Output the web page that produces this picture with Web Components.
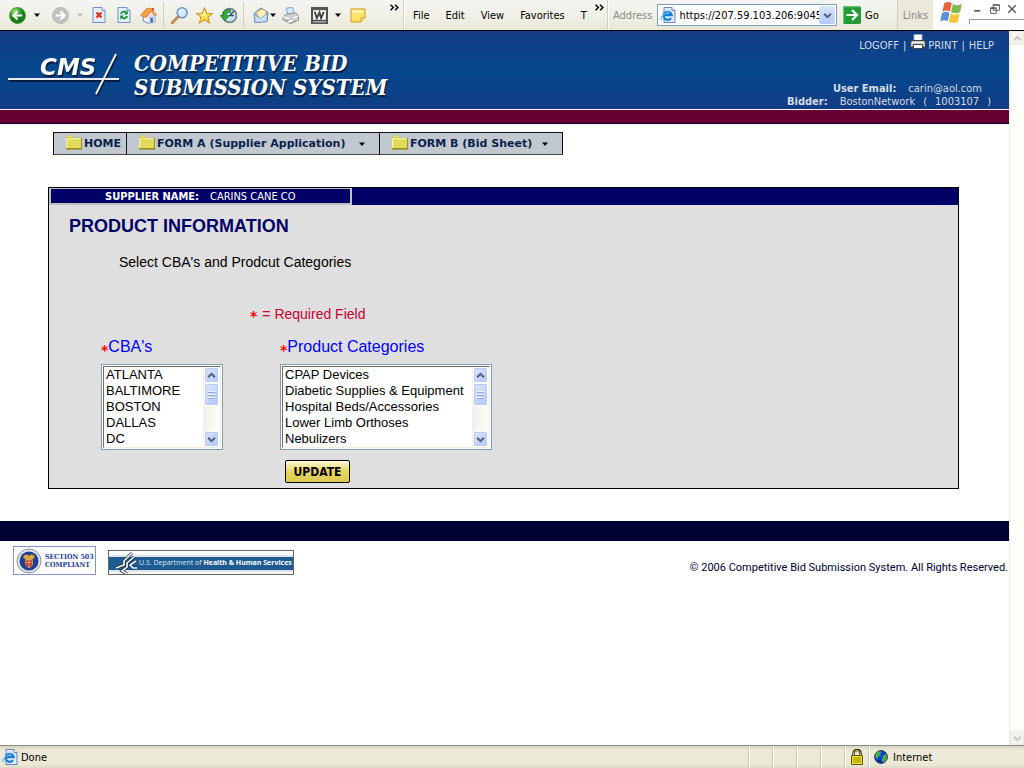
<!DOCTYPE html>
<html lang="en">
<head>
<meta charset="utf-8">
<title>Competitive Bid Submission System</title>
<style>
html,body{margin:0;height:100%}
body{font-family:"DejaVu Sans Condensed","DejaVu Sans",sans-serif;font-stretch:condensed;font-size:11px;color:#000;background:#fff}
</style>
</head>
<body>
<browser-window>
  <browser-toolbar slot="toolbar"></browser-toolbar>
  <site-header></site-header>
  <site-nav>
    <nav-item>HOME</nav-item>
    <nav-item menu>FORM A (Supplier Application)</nav-item>
    <nav-item menu>FORM B (Bid Sheet)</nav-item>
  </site-nav>
  <info-panel supplier="CARINS CANE CO">
    <span slot="heading">PRODUCT INFORMATION</span>
    <span slot="intro">Select CBA's and Prodcut Categories</span>
    <list-field label="CBA's" options="ATLANTA|BALTIMORE|BOSTON|DALLAS|DC"></list-field>
    <list-field label="Product Categories" options="CPAP Devices|Diabetic Supplies &amp; Equipment|Hospital Beds/Accessories|Lower Limb Orthoses|Nebulizers"></list-field>
  </info-panel>
  <site-footer></site-footer>
  <status-bar slot="status"></status-bar>
</browser-window>
<script>
const define = (name, html) => customElements.define(name, class extends HTMLElement {
  connectedCallback() {
    if (this.shadowRoot) return;
    const t = document.createElement('template');
    t.innerHTML = '<style>*{box-sizing:border-box}button{font:inherit;color:inherit;background:none;border:0;padding:0;margin:0}a{color:inherit;text-decoration:none}</style>' + (typeof html === 'function' ? html(this) : html);
    this.attachShadow({ mode: 'open' }).append(t.content.cloneNode(true));
  }
});

const page = '<path d="M2 .5h9l3 3v12H2z" fill="#e4efff" stroke="#6f92cf"/><path d="M11 .5v3h3" fill="#fff" stroke="#6f92cf"/>';
const ie = '<path d="M4 .5h8l3 3v12H4z" fill="#dceafc" stroke="#6d82bd"/><path d="M12 .5v3h3" fill="#fff" stroke="#6d82bd"/><path d="M11 11.2a4 4 0 1 1 .6-3.2H4" fill="none" stroke="#1680d4" stroke-width="2.3"/><path d="M1.500 13C-.5 11 4 5.500 11 4" fill="none" stroke="#56b4ee" stroke-width="1.200"/>';
const ICONS = {
  back: [17, '<defs><radialGradient id="g" cx=".35" cy=".25"><stop stop-color="#a4e88e"/><stop offset=".6" stop-color="#3daa2e"/><stop offset="1" stop-color="#1b7d18"/></radialGradient></defs><circle cx="8" cy="8" r="7.500" fill="url(#g)" stroke="#2c8b25" stroke-width=".7"/><path d="M12.500 8H4.500M8 4.300 4.200 8 8 11.700" fill="none" stroke="#fff" stroke-width="2"/>'],
  forward: [17, '<circle cx="8" cy="8" r="7.500" fill="#c3c3c3" stroke="#a9a9a9" stroke-width=".7"/><path d="M3.500 8h8M8 4.300 11.800 8 8 11.700" fill="none" stroke="#fff" stroke-width="2"/>'],
  caret: [6, '<path d="M0 4h16L8 13z" fill="#000"/>'],
  fade: [6, '<path d="M0 4h16L8 13z" fill="#bdbdb4"/>'],
  stop: [16, page + '<path d="m5.500 5.500 5 5m0-5-5 5" stroke="#e8330f" stroke-width="2.400"/>'],
  refresh: [16, page + '<path d="M5 7c.5-3 4-3 5.500-1M11 9c-.5 3-4 3-5.500 1" fill="none" stroke="#1d962b" stroke-width="2"/><path d="M11.800 3.500v4H8zM4.200 12.500v-4H8z" fill="#1d962b"/>'],
  home: [17, '<path d="M3 7v6l5 2.500 6-2V7L9.500 2z" fill="#f5f8ff" stroke="#8092bf"/><path d="M8 15.500V8L14 7v6.500z" fill="#c7d8f8"/><path d="M.5 8 6 1.500 10 1l5.500 6-1 1.500-4-4L6 10z" fill="#f2a146" stroke="#c9752a" stroke-width=".6"/><path d="M11 1h2v3l-2-2z" fill="#b94a25"/><path d="M10 10h2v4.500l-2 .5z" fill="#4a5d9c"/>'],
  search: [17, '<path d="M1 15 6.500 9.500" stroke="#c48a4e" stroke-width="2.600" stroke-linecap="round"/><circle cx="10.500" cy="5.500" r="4.700" fill="#cfeaff" stroke="#7291cf" stroke-width="1.400"/><path d="M8 5c.5-2 2-2.500 3.500-2.300" stroke="#fff" fill="none"/>'],
  star: [17, '<path d="m8 .8 2.100 5 5.400.3-4.200 3.500 1.500 5.400L8 12l-4.800 3 1.500-5.400L.5 6.100l5.400-.3z" fill="#ffe24d" stroke="#d49420"/><path d="m8 3 1 4-2 2-3-2 2.500-.5z" fill="#fff6af"/>'],
  history: [17, '<circle cx="9" cy="8" r="6.500" fill="#cbe5ea" stroke="#73848c" stroke-width="1.600"/><path d="M9 8l4-4M9 8h4" stroke="#334d63" stroke-width="1.200"/><path d="M10 2.500C5 1.500 2.500 4 2.700 8H0l4.500 5L9 8H6c0-2 1-3 4-3z" fill="#36a83c" stroke="#19752a" stroke-width=".6"/>'],
  mail: [16, '<path d="M1 6.500 8 1l7 4.500-1 9L2 15.500z" fill="#9fc2f5" stroke="#5c7fc0"/><path d="M3 5.500 9 2l4 2.500v5L7 12z" fill="#fff3b3" stroke="#d69e4c" stroke-width=".7"/><path d="m1.300 7.500 6 4 7.200-5-.8 8-11.400 1z" fill="#cde2ff" stroke="#6b8fd0" stroke-width=".7"/>'],
  print: [17, '<path d="m4 1 6-.5L11.500 7l-6 1.500z" fill="#d4edff" stroke="#699bd2" stroke-width=".8"/><path d="m1 9 4-2.500 8-1 2.500 3v4L8 15.500 1 12z" fill="#cfcfcf" stroke="#808080" stroke-width=".8"/><path d="m1 9 7 2.500 7.500-3" fill="none" stroke="#fff"/><path d="m4 13 6-2 2 2-5 2.500z" fill="#fff" stroke="#777" stroke-width=".6"/>'],
  word: [17, '<path fill="#555" d="M0 0h16v16H0z"/><path d="M2 3h12v9H2z" fill="#fff"/><path d="m3.500 4.500 2 6L8 5l1.500 5.500L12 4.500" fill="none" stroke="#444" stroke-width="1.800"/><path d="M2 14h12" stroke="#ccc"/>'],
  note: [16, '<path d="M1 2h14v9l-4 4H1z" fill="#ffe467" stroke="#d7981c"/><path d="M15 11h-4v4" fill="#fff5b0" stroke="#d7981c"/><path d="M2 3h12v3H2z" fill="#fff1a5"/>'],
  chevrons: [9, '<path d="m1 3 5 5-5 5M9 3l5 5-5 5" fill="none" stroke="#000" stroke-width="2.600"/>'],
  go: [18, '<rect width="16" height="16" rx="1.500" fill="#259b36"/><path d="M.5 15V.5H15" fill="none" stroke="#62c36b"/><path d="M3 8h9M8 3.500 12.500 8 8 12.500" fill="none" stroke="#fff" stroke-width="1.900"/>'],
  windows: [24, '<path d="M3.500 1.500c2-1.200 3.700-1 5 0L7.300 7c-1.600-1-3-1-5 0z" fill="#e8633a"/><path d="M9.300 2c1.600 1 3.700 1 6 0L14 7.500c-2 1-4 1-6-.1z" fill="#82bb4c"/><path d="M2 8c2-1.200 3.500-1 5 0l-1.200 5.500c-1.600-1-3-1-5 0z" fill="#5b8de0"/><path d="M7.800 8.400c1.800 1 3.800 1 6 0L12.500 14c-2 1-4 1-6-.1z" fill="#f8c43a"/>'],
  ie: [16, ie],
  lock: [16, '<path d="M4.500 7V4.500C4.500-.2 11.500-.2 11.500 4.500V7" fill="none" stroke="#222" stroke-width="2.400"/><path d="M4.500 7V4.500C4.500.5 11.500.5 11.500 4.500V7" fill="none" stroke="#d8d13c"/><path d="M2.500 6.500h11v9h-11z" fill="#efe61f" stroke="#5b5800"/><path d="M4 9h8M4 11h8M4 13h8" stroke="#8f8a00"/>'],
  globe: [14, '<circle cx="8" cy="8" r="7.300" fill="#1240d8" stroke="#10203a"/><path d="M2 4c2-3 5-3 7-2l-2 2 1 2-3 1-1 3-3-2zM10 7l4-3 1 4-2 5-3 1-1-3z" fill="#3db546"/><path d="M4 12l3-1 2 3z" fill="#000a56"/>'],
  folder: [17, '<path d="M1 3.500 2 1.500h5L8 3.500h8v11H1z" fill="#b8ab2a"/><path d="M1 3 2 1.500h5L8 3.500" fill="#e5dd7a"/><path d="M1 4h14v9.500H1z" fill="#e0d95c"/><path d="M1.500 13V4.500H14.500" fill="none" stroke="#fbf7b1"/><path d="M1 14h15V4" fill="none" stroke="#8e8124"/>'],
  printer: [16, '<path d="M4 .5h8v7H4z" fill="#fff" stroke="#9aa"/><path d="M1.500 6.500h13l1 3v3.500H.5V9.500z" fill="#c4c4c4" stroke="#444"/><path d="M2 8.500h12" stroke="#f4f4f4"/><path d="M3.500 10.500h9v4h-9z" fill="#fff" stroke="#444"/>'],
  up: [9, '<path d="m2 11 6-6 6 6" fill="none" stroke="currentColor" stroke-width="3.600"/>'],
  down: [9, '<path d="m2 5 6 6 6-6" fill="none" stroke="currentColor" stroke-width="3.600"/>'],
  min: [9, '<path d="M2 12h11" stroke="#555" stroke-width="3"/>'],
  restore: [10, '<path d="M5 1h10v9H5zM1 6h9v9H1z" fill="#fff" stroke="#555" stroke-width="1.500"/><path d="M5 2h10M1 7h9" stroke="#555" stroke-width="1.500"/>'],
  close: [10, '<path d="m2 2 12 12M14 2 2 14" stroke="#555" stroke-width="2.200"/>']
};
define('ui-icon', el => { const [s, body] = ICONS[el.getAttribute('name')];
  return `<style>:host{display:block;flex:none;width:${s}px;height:${s}px}svg{display:block}</style><svg viewBox="0 0 16 16" width="${s}" height="${s}" aria-hidden="true">${body}</svg>`; });

define('xp-scrollbar', `<style>
:host{display:flex;flex-direction:column;flex:none;width:17px;background:linear-gradient(90deg,#f1f0ea,#fefefb);color:#4d6185}
button,.thumb{flex:none;display:grid;place-items:center;height:16px;margin:0 1px;border:1px solid #fff;border-radius:2px;background:linear-gradient(135deg,#dbe5fd,#b2c8f8);box-shadow:inset 0 0 0 1px #b9cbf3}
.thumb{height:23px;align-content:center;gap:1px}
.thumb i{width:7px;height:1px;background:#edf3ff;border-bottom:1px solid #8fabe5;box-sizing:content-box}
.track{flex:1}
:host([disabled]){width:15px;color:#c9c8c0;background:#fefefb;border-left:1px solid #eeede5}
:host([disabled]) .thumb{display:none}
:host([disabled]) button{height:14px;margin:0;background:#f4f3ed;border-color:#eceae1;box-shadow:none}
</style><button type="button" aria-label="Scroll up"><ui-icon name="up"></ui-icon></button><div class="thumb"><i></i><i></i><i></i></div><div class="track"></div><button type="button" aria-label="Scroll down"><ui-icon name="down"></ui-icon></button>`);

define('browser-window', `<style>
:host{display:flex;flex-direction:column;min-height:100vh}
.view{flex:1;display:flex}
main{flex:1;min-width:0;background:#fff}
</style><slot name="toolbar"></slot><div class="view"><main><slot></slot></main><xp-scrollbar disabled></xp-scrollbar></div><slot name="status"></slot>`);

const TOOLS = ['back:Back','caret:Back list','forward:Forward','fade:Forward list','stop:Stop','refresh:Refresh','home:Home','|','search:Search','star:Favorites','history:History','|','mail:Mail','caret:Mail list','print:Print','word:Edit with Word','caret:Edit list','note:Discuss','chevrons:More'];
define('browser-toolbar', `<style>
:host{display:flex;height:30px;border-bottom:1px solid #000;background:linear-gradient(#f4f4f2,#f0efe6 60%,#e9e7d8)}
.tools{display:grid;grid-template-columns:24px 16px 30px 10px 28px 22px 26px 4px 28px 22px 26px 4px 24px 8px 26px 32px 6px 34px 24px;padding-left:5px;width:404px;flex:none;border-right:1px solid #d0cebf}
.tools button{display:grid;place-items:center}
.sep{width:1px;justify-self:center;background:#d0cebf;margin:2px 0}
.tools button.mail{justify-content:end}
.top,.tools button.chevrons{align-self:start;height:14px;display:grid;place-items:center}
.tools button.chevrons{justify-content:end}
nav{display:flex;align-items:center;gap:16px;padding-left:8px;width:204px;flex:none;border-left:1px solid #fff;border-right:1px solid #d0cebf}
nav button.top{margin-left:-8px}
.address{flex:1;display:flex;align-items:center;gap:5px;border-left:1px solid #fff;padding-left:4px;min-width:0}
label,.links{color:#8c8b80}
.box{flex:1;display:flex;align-items:center;height:22px;min-width:0;border:1px solid #7f9db9;background:#fff;padding:1px 1px 1px 2px}
input{flex:1;min-width:0;border:0;padding:0;margin:0 0 0 3px;height:18px;outline:0;background:none;font:inherit;color:#000}
.drop{width:16px;height:18px;flex:none;display:grid;place-items:center;border-radius:2px;background:linear-gradient(#dbe5fd,#b5caf8);color:#4d6185}
.go{display:flex;align-items:center;gap:4px;width:54px;flex:none;margin-left:1px}
.links{width:36px;flex:none;text-align:center;align-self:stretch;background:#ebe9dc;border-left:1px solid #d0cebf}
.win{width:91px;flex:none;display:grid;grid-template-columns:36px 1fr;background:#fff;place-items:center}
.win>ui-icon{margin-top:-4px}
.ctl{align-self:stretch;justify-self:stretch;display:grid;grid-template-rows:19px 10px}
.btns{display:flex;justify-content:space-between;align-items:center;padding:0 7px 2px 4px}
.line{border:1px solid #999;border-width:1px 0 0 1px;height:5px}
</style>
<div class="tools">${TOOLS.map(t => { if (t === '|') return '<span class="sep"></span>'; const [n, l] = t.split(':'); return `<button class="${n}" aria-label="${l}"><ui-icon name="${n}"></ui-icon></button>`; }).join('')}</div>
<nav><button>File</button><button>Edit</button><button>View</button><button>Favorites</button><button>T</button><button class="top" aria-label="More menus"><ui-icon name="chevrons"></ui-icon></button></nav>
<div class="address"><label for="url">Address</label><div class="box"><ui-icon name="ie"></ui-icon><input id="url" value="https://207.59.103.206:9045"><button class="drop" aria-label="Address list"><ui-icon name="down"></ui-icon></button></div><button class="go"><ui-icon name="go"></ui-icon>Go</button></div>
<button class="links">Links</button>
<div class="win"><ui-icon name="windows"></ui-icon><div class="ctl"><div class="btns"><button aria-label="Minimize"><ui-icon name="min"></ui-icon></button><button aria-label="Restore"><ui-icon name="restore"></ui-icon></button><button aria-label="Close"><ui-icon name="close"></ui-icon></button></div><div class="line"></div></div></div>`);

define('site-header', `<style>
:host{display:block;color:#d5dce4;border-bottom:1px solid #000033}
.blue{min-height:78px;display:flex;justify-content:space-between;background:linear-gradient(#123c83,#06488f 50%,#123c83)}
.stripe{box-sizing:content-box;height:13px;background:#660033;border-top:1px solid #fff}
.brand{display:flex;align-items:flex-start;padding:20px 0 0 8px;gap:14px}
svg{display:block;flex:none;overflow:visible}
.mark{filter:drop-shadow(1px 2px 0 #071c40)}
h1{margin:0;font:italic bold 22px/24px "DejaVu Serif Condensed","DejaVu Serif",serif;font-stretch:condensed;color:#fff;text-shadow:1px 2px 1px #071c40;white-space:nowrap}
.user{display:flex;flex-direction:column;padding-right:15px;text-align:right;white-space:nowrap}
.links{display:flex;justify-content:flex-end;align-items:center;height:20px;gap:4px;padding-top:8px;margin-bottom:31px}
.print{display:flex;align-items:center;gap:2px}
.print ui-icon{margin-top:-6px}
dl{margin:0;display:flex;justify-content:flex-end;gap:12px;line-height:13px;padding-right:3px}
dl.email{padding-right:12px}
dd{margin:0;display:flex;gap:8px}dt{font-weight:bold}
</style>
<div class="blue"><div class="brand"><svg width="112" height="48" viewBox="0 0 112 48" role="img" aria-label="CMS"><g class="mark"><path d="M0 27h111v2H0z" fill="#e6e9ef"/><path d="M108 3 88 43" stroke="#fff" stroke-width="1.800"/><text x="32" y="24" fill="#fff" font-family="DejaVu Sans" font-weight="bold" font-style="italic" font-size="23" style="font-stretch:normal">CMS</text></g></svg><h1>COMPETITIVE BID<br>SUBMISSION SYSTEM</h1></div>
<div class="user"><div class="links"><a href="#logoff">LOGOFF</a><span>|</span><a class="print" href="#print"><ui-icon name="printer"></ui-icon>PRINT</a><span>|</span><a href="#help">HELP</a></div>
<dl class="email"><dt>User Email:</dt><dd>carin@aol.com</dd></dl><dl><dt>Bidder:</dt><dd><span>BostonNetwork</span><span>(</span><span>1003107</span><span>)</span></dd></dl></div></div>
<div class="stripe"></div>`);
define('site-nav', `<style>:host{display:grid;grid-template-columns:73px 253px 183px;margin:8px 0 0 53px;width:max-content;border-left:1px solid #111}</style><slot></slot>`);
define('nav-item', el => `<style>
:host{display:block;border:1px solid #111;border-left:0;border-bottom-color:#4f4748;background:#c2c8cf;color:#0b1f4b;font:bold 11px "DejaVu Sans",sans-serif}
a,button{display:flex;align-items:center;width:100%;height:21px;gap:2px;padding:0 12px 0 11px;white-space:nowrap}
a{padding-right:0}
button ui-icon[name=caret]{margin-left:auto;width:8px}
ui-icon[name=folder]{margin-top:-3px}
</style>` + (el.hasAttribute('menu') ? `<button aria-haspopup="true"><ui-icon name="folder"></ui-icon><slot></slot><ui-icon name="caret"></ui-icon></button>` : `<a href="#home"><ui-icon name="folder"></ui-icon><slot></slot></a>`));

define('info-panel', el => `<style>
:host{display:block;margin:32px 50px 0 48px;border:1px solid #000;background:#dfdfdf;font-family:"Liberation Sans",Arial,sans-serif}
.bar{background:#000066;height:17px}
.tab{width:303px;height:17px;border:2px solid #c0c0c0;border-top-width:1px;padding-left:54px;display:flex;gap:11px;align-items:center;color:#fff;font:11px/13px "DejaVu Sans Condensed","DejaVu Sans",sans-serif;font-stretch:condensed}
h2{margin:0;padding:11px 20px 0;font-size:18px;line-height:20px;color:#000066}
p{margin:0;font-size:14px;line-height:16px;padding:18px 0 0 70px}
p.note{padding:36px 0 0 201px;color:#cc0033;display:flex;gap:5px}
.req{color:#f00;font:bold 14px/12px "DejaVu Sans",sans-serif;padding-top:4px}
.fields{display:grid;grid-template-columns:122px 212px;column-gap:57px;padding:14px 0 0 52px}
.go{padding:10px 0 5px 236px}
.go button{display:block;width:65px;height:23px;border:1px solid #000;border-radius:2px;background:linear-gradient(#fbf8dc,#ead965 45%,#dcc84f);font:bold 12px "DejaVu Sans Condensed","DejaVu Sans",sans-serif;font-stretch:condensed;color:#000}
</style><div class="bar"><div class="tab"><b>SUPPLIER NAME:</b><span>${el.getAttribute('supplier')}</span></div></div>
<h2><slot name="heading"></slot></h2><p><slot name="intro"></slot></p><p class="note"><span class="req">*</span>= Required Field</p>
<form onsubmit="return false"><div class="fields"><slot></slot></div><div class="go"><button>UPDATE</button></div></form>`);

define('list-field', el => `<style>
:host{display:block}
label{display:flex;height:20px;font-size:16px;line-height:22px;color:#00f;margin-bottom:8px}
.req{color:#f00;font:bold 14px/20px "DejaVu Sans",sans-serif;padding-top:4px;height:20px}
.box{display:flex;border:1px solid #7f9db9;background:#fff;padding:1px}
.in{flex:1;display:flex;min-width:0;height:82px;border:1px solid #716f64;border-right-color:#f1efe2;border-bottom-color:#f1efe2}
select{flex:1;min-width:0;height:80px;border:0;outline:0;margin:0;padding:0;overflow:hidden;scrollbar-width:none;background:#fff;color:#000;font:13px/16px "Liberation Sans",Arial,sans-serif}
option{height:16px;min-height:16px;line-height:16px;padding:0 2px}
</style><label for="list"><span class="req">*</span>${el.getAttribute('label')}</label><div class="box"><div class="in"><select id="list" multiple size="5">${el.getAttribute('options').split('|').map(o => `<option>${o.replace('&', '&amp;')}</option>`).join('')}</select><xp-scrollbar></xp-scrollbar></div></div>`);

define('site-footer', `<style>
:host{display:block;margin-top:32px}
.bar{height:20px;background:#000033}
.row{display:flex;align-items:flex-start;padding:5px 1px 0 13px}
.s503{display:flex;align-items:center;gap:3px;width:83px;height:29px;border:1px solid #8495c4;padding-left:2px;font:bold 7px/8px "DejaVu Serif Condensed","DejaVu Serif",serif;font-stretch:condensed;color:#2340a0;white-space:nowrap}
.hhs{display:flex;align-items:center;width:186px;height:25px;margin:4px 0 0 12px;border:1px solid #666;background:linear-gradient(#fff 0 2px,#d5dce2 6px,#1d5c93 6px 19px,#d5dce2 19px,#fff);color:#dbe8f4;font:7px "Open Sans",sans-serif;white-space:nowrap;padding-left:5px}
.hhs b{color:#fff}
svg{flex:none}
p{margin:15px 0 0 auto;font:11px/14px Roboto,sans-serif;color:#000033}
</style><div class="bar"></div><div class="row">
<a class="s503" href="#section503"><svg width="26" height="26" viewBox="0 0 26 26"><circle cx="13" cy="13" r="12" fill="#dfe2ea" stroke="#8c93a3"/><circle cx="13" cy="13" r="9.500" fill="#1f3f94"/><path d="M7 9c2-3 4-3 6-1 2-2 4-2 6 1l-3 3H10z" fill="#d9a63a"/><path d="M9.500 12h7v5l-3.500 3-3.500-3z" fill="#c8352b" stroke="#e8c46a" stroke-width=".6"/><path d="M9.500 14.500h7M13 12v8" stroke="#e8c46a" stroke-width=".7"/></svg><span>SECTION 503<br>COMPLIANT</span></a>
<a class="hhs" href="#hhs"><svg width="25" height="23" viewBox="0 0 25 23"><g fill="none" stroke="#1a3049" stroke-width="3"><path d="M18 2 10 10v4l-8 3M20 6l-7 6v4l-5 4 5 3M22 10l-6 4 3 3h4"/></g><g fill="none" stroke="#fff" stroke-width="1.600"><path d="M18 2 10 10v4l-8 3M20 6l-7 6v4l-5 4 5 3M22 10l-6 4 3 3h4"/></g></svg><span>U.S. Department of <b>Health &amp; Human Services</b></span></a>
<p>© 2006 Competitive Bid Submission System. All Rights Reserved.</p></div>`);

define('status-bar', `<style>
:host{display:flex;height:22px;border-top:1px solid #8e8d83;background:linear-gradient(#d5d2c3,#ece9d8 4px,#ece9d8 18px,#dedac7)}
.done,.cell,.zone{display:flex;align-items:center}
.done{flex:1;padding-left:2px;gap:3px}
.cell{width:24px;border-left:1px solid #cdcab9;box-shadow:inset 1px 0 #fff;justify-content:center}
.zone{width:156px;padding-left:5px;gap:5px;border-left:1px solid #cdcab9;box-shadow:inset 1px 0 #fff}
</style><div class="done"><ui-icon name="ie"></ui-icon>Done</div><div class="cell"></div><div class="cell"></div><div class="cell"></div><div class="cell"></div><div class="cell"><ui-icon name="lock"></ui-icon></div><div class="zone"><ui-icon name="globe"></ui-icon>Internet</div>`);
</script>
</body>
</html>
